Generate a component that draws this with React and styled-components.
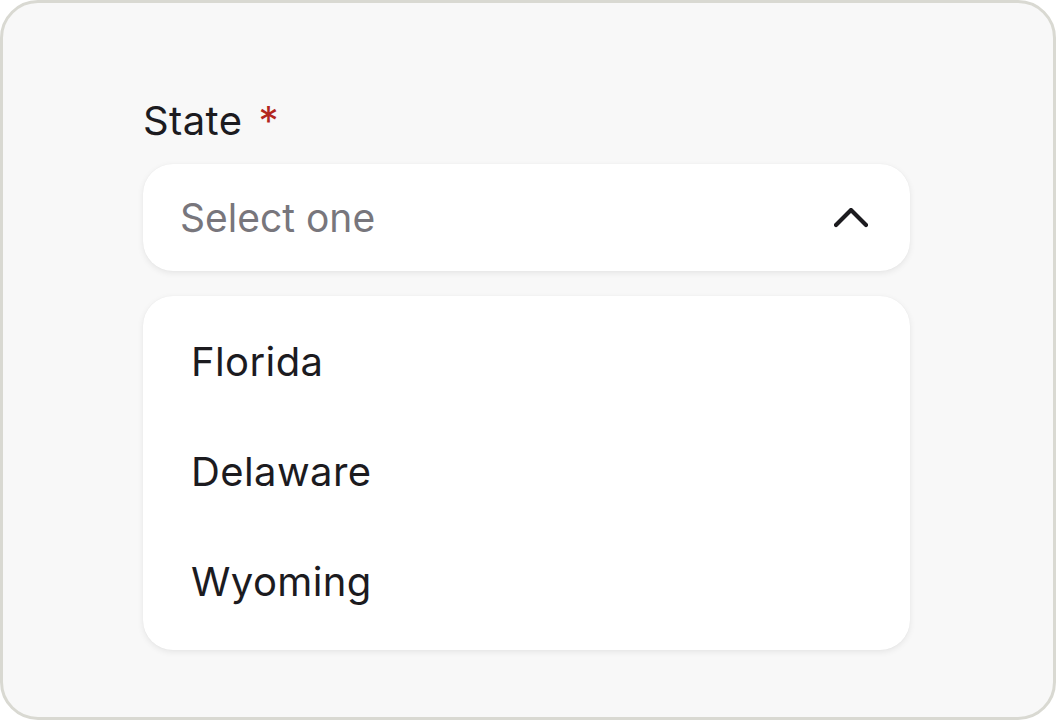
import React from 'react';
import styled, { createGlobalStyle } from 'styled-components';

const GlobalStyle = createGlobalStyle`
  html, body {
    margin: 0;
    padding: 0;
    background: #ffffff;
  }
  * {
    box-sizing: border-box;
  }
`;

const Frame = styled.div`
  width: 1056px;
  height: 720px;
  border: 3px solid #d9d9d2;
  border-radius: 38px;
  background: #f8f8f8;
  padding: 94px 0 0 140px;
  display: flex;
  flex-direction: column;
  font-family: Inter, "Liberation Sans", sans-serif;
`;

const Field = styled.div`
  width: 767px;
  display: flex;
  flex-direction: column;
`;

const Label = styled.label`
  font-size: 40px;
  line-height: 48px;
  letter-spacing: 0.4px;
  color: #1c1b1f;
  margin-bottom: 19px;
`;

const Required = styled.span`
  color: #b3261e;
  margin-left: 16px;
`;

const SelectBox = styled.div`
  height: 107px;
  background: #ffffff;
  border-radius: 30px;
  box-shadow: 0 2px 6px rgba(0, 0, 0, 0.08), 0 0 1px rgba(0, 0, 0, 0.06);
  display: flex;
  align-items: center;
  justify-content: space-between;
  padding: 0 42px 0 37px;
`;

const Placeholder = styled.span`
  font-size: 39px;
  color: #78767c;
`;

const Menu = styled.ul`
  list-style: none;
  margin: 25px 0 0;
  padding: 10px 0 14px;
  background: #ffffff;
  border-radius: 30px;
  box-shadow: 0 2px 6px rgba(0, 0, 0, 0.08), 0 0 1px rgba(0, 0, 0, 0.06);
`;

const Option = styled.li`
  height: 110px;
  display: flex;
  align-items: center;
  padding-left: 48px;
  font-size: 40px;
  letter-spacing: 0.4px;
  color: #1c1b1f;
`;

const Chevron = () => (
  <svg width="34" height="20" viewBox="0 0 34 20" fill="none">
    <polyline
      points="2,17 17,2 32,17"
      stroke="#1c1b1f"
      strokeWidth="4.2"
      strokeLinecap="round"
      strokeLinejoin="round"
    />
  </svg>
);

const states = ['Florida', 'Delaware', 'Wyoming'];

const App = () => (
  <>
    <GlobalStyle />
    <Frame>
      <Field>
        <Label>
          State<Required>*</Required>
        </Label>
        <SelectBox>
          <Placeholder>Select one</Placeholder>
          <Chevron />
        </SelectBox>
        <Menu>
          {states.map((s) => (
            <Option key={s}>{s}</Option>
          ))}
        </Menu>
      </Field>
    </Frame>
  </>
);

export default App;
